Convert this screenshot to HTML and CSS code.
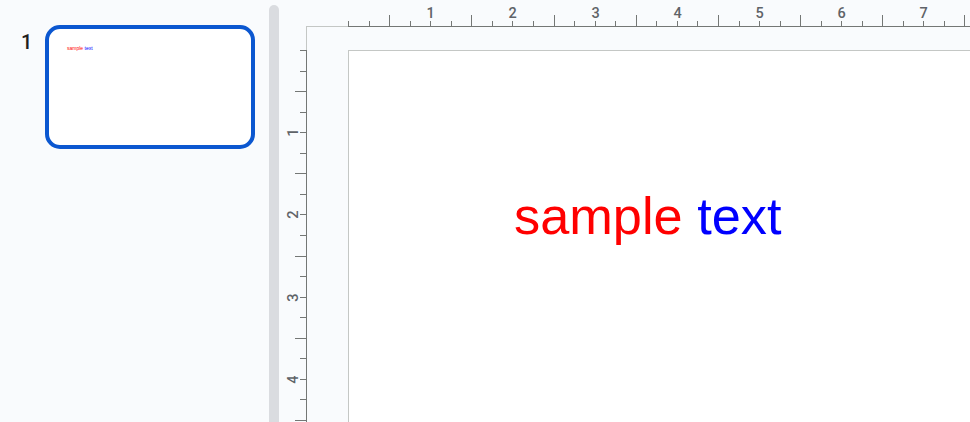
FILE: index.html
```html
<!DOCTYPE html>
<html>
<head>
<meta charset="utf-8">
<link rel="stylesheet" href="styles.css">
</head>
<body>
<div class="app">
  <aside class="filmstrip">
    <div class="slide-item">
      <span class="slide-num">1</span>
      <div class="thumb">
        <div class="thumb-text"><span class="red">sample</span> <span class="blue">text</span></div>
      </div>
    </div>
  </aside>
  <div class="scrollbar"></div>
  <main class="editor">
    <div class="corner">
      <svg width="28" height="27" class="ruler-svg"><line x1="27" y1="26.5" x2="28" y2="26.5" class="light"/></svg>
    </div>
    <div class="hruler">
      <svg width="663" height="27" class="ruler-svg">
        <line x1="0" y1="26.5" x2="41" y2="26.5" class="light"/>
        <line x1="41" y1="26.5" x2="663" y2="26.5" class="dark"/>
        <g class="dark">
          <line x1="41.5" y1="21" x2="41.5" y2="26"/>
          <line x1="62.5" y1="21" x2="62.5" y2="26"/>
          <line x1="82.5" y1="15" x2="82.5" y2="26"/>
          <line x1="103.5" y1="21" x2="103.5" y2="26"/>
          <line x1="123.5" y1="21" x2="123.5" y2="26"/>
          <line x1="144.5" y1="21" x2="144.5" y2="26"/>
          <line x1="164.5" y1="15" x2="164.5" y2="26"/>
          <line x1="185.5" y1="21" x2="185.5" y2="26"/>
          <line x1="205.5" y1="21" x2="205.5" y2="26"/>
          <line x1="226.5" y1="21" x2="226.5" y2="26"/>
          <line x1="247.5" y1="15" x2="247.5" y2="26"/>
          <line x1="267.5" y1="21" x2="267.5" y2="26"/>
          <line x1="288.5" y1="21" x2="288.5" y2="26"/>
          <line x1="308.5" y1="21" x2="308.5" y2="26"/>
          <line x1="329.5" y1="15" x2="329.5" y2="26"/>
          <line x1="349.5" y1="21" x2="349.5" y2="26"/>
          <line x1="370.5" y1="21" x2="370.5" y2="26"/>
          <line x1="390.5" y1="21" x2="390.5" y2="26"/>
          <line x1="411.5" y1="15" x2="411.5" y2="26"/>
          <line x1="432.5" y1="21" x2="432.5" y2="26"/>
          <line x1="452.5" y1="21" x2="452.5" y2="26"/>
          <line x1="473.5" y1="21" x2="473.5" y2="26"/>
          <line x1="493.5" y1="15" x2="493.5" y2="26"/>
          <line x1="514.5" y1="21" x2="514.5" y2="26"/>
          <line x1="534.5" y1="21" x2="534.5" y2="26"/>
          <line x1="555.5" y1="21" x2="555.5" y2="26"/>
          <line x1="575.5" y1="15" x2="575.5" y2="26"/>
          <line x1="596.5" y1="21" x2="596.5" y2="26"/>
          <line x1="616.5" y1="21" x2="616.5" y2="26"/>
          <line x1="637.5" y1="21" x2="637.5" y2="26"/>
          <line x1="657.5" y1="15" x2="657.5" y2="26"/>
        </g>
        <g class="nums">
          <text x="123.5" y="18">1</text>
          <text x="205.5" y="18">2</text>
          <text x="288.5" y="18">3</text>
          <text x="370.5" y="18">4</text>
          <text x="452.5" y="18">5</text>
          <text x="534.5" y="18">6</text>
          <text x="616.5" y="18">7</text>
        </g>
      </svg>
    </div>
    <div class="vruler">
      <svg width="28" height="395" class="ruler-svg">
        <line x1="27.5" y1="0" x2="27.5" y2="23" class="light"/>
        <line x1="27.5" y1="23" x2="27.5" y2="395" class="dark"/>
        <g class="dark">
          <line x1="21" y1="23.5" x2="27" y2="23.5"/>
          <line x1="21" y1="44.5" x2="27" y2="44.5"/>
          <line x1="16" y1="64.5" x2="27" y2="64.5"/>
          <line x1="21" y1="85.5" x2="27" y2="85.5"/>
          <line x1="21" y1="105.5" x2="27" y2="105.5"/>
          <line x1="21" y1="126.5" x2="27" y2="126.5"/>
          <line x1="16" y1="146.5" x2="27" y2="146.5"/>
          <line x1="21" y1="167.5" x2="27" y2="167.5"/>
          <line x1="21" y1="187.5" x2="27" y2="187.5"/>
          <line x1="21" y1="208.5" x2="27" y2="208.5"/>
          <line x1="16" y1="229.5" x2="27" y2="229.5"/>
          <line x1="21" y1="249.5" x2="27" y2="249.5"/>
          <line x1="21" y1="270.5" x2="27" y2="270.5"/>
          <line x1="21" y1="290.5" x2="27" y2="290.5"/>
          <line x1="16" y1="311.5" x2="27" y2="311.5"/>
          <line x1="21" y1="331.5" x2="27" y2="331.5"/>
          <line x1="21" y1="352.5" x2="27" y2="352.5"/>
          <line x1="21" y1="372.5" x2="27" y2="372.5"/>
          <line x1="16" y1="393.5" x2="27" y2="393.5"/>
        </g>
        <g class="nums">
          <text transform="translate(19 105.5) rotate(-90)">1</text>
          <text transform="translate(19 187.5) rotate(-90)">2</text>
          <text transform="translate(19 270.5) rotate(-90)">3</text>
          <text transform="translate(19 352.5) rotate(-90)">4</text>
        </g>
      </svg>
    </div>
    <div class="canvas">
      <div class="slide">
        <p class="slide-text"><span class="red">sample</span> <span class="blue">text</span></p>
      </div>
    </div>
  </main>
</div>
</body>
</html>
```
FILE: styles.css
```css
html, body {
  margin: 0;
  padding: 0;
}
body {
  background: #f9fbfd;
  font-family: Roboto, "Liberation Sans", sans-serif;
  overflow: hidden;
}
.app {
  display: flex;
  width: 970px;
  height: 422px;
  overflow: hidden;
}
.filmstrip {
  width: 269px;
  flex-shrink: 0;
  box-sizing: border-box;
  padding: 25px 0 0 21px;
}
.slide-item {
  display: flex;
  align-items: flex-start;
}
.slide-num {
  width: 24px;
  padding-top: 8px;
  font-size: 20px;
  line-height: 19px;
  font-weight: 500;
  color: #1f1f1f;
}
.thumb {
  width: 210px;
  height: 124px;
  box-sizing: border-box;
  border: 4px solid #0b57d0;
  border-radius: 15px;
  background: #fff;
  padding: 17px 0 0 18px;
}
.thumb-text {
  font-family: "Liberation Sans", Arial, sans-serif;
  font-size: 5px;
  line-height: 1;
  margin: 0;
}
.red { color: #ff0000; }
.blue { color: #0000ff; }
.scrollbar {
  width: 10px;
  flex-shrink: 0;
  margin-top: 5px;
  background: #dadce0;
  border-radius: 5px 5px 0 0;
}
.editor {
  flex: 1;
  min-width: 0;
  display: grid;
  grid-template-columns: 28px 1fr;
  grid-template-rows: 27px 1fr;
  overflow: hidden;
}
.ruler-svg {
  display: block;
}
.ruler-svg line {
  shape-rendering: crispEdges;
  stroke-width: 1;
}
.ruler-svg .light {
  stroke: #c4c7c5;
}
.ruler-svg .dark,
.ruler-svg .dark line {
  stroke: #747775;
}
.ruler-svg .nums text {
  font-family: Roboto, "Liberation Sans", sans-serif;
  font-size: 14.5px;
  font-weight: 500;
  fill: #5f6368;
  text-anchor: middle;
}
.hruler, .vruler, .corner {
  overflow: hidden;
}
.canvas {
  overflow: hidden;
  padding: 23px 0 0 41px;
  display: flex;
  align-items: flex-start;
}
.slide {
  flex-shrink: 0;
  width: 820px;
  height: 461px;
  border: 1px solid #c4c7c5;
  background: #fff;
}
.slide-text {
  margin: 0;
  padding: 139px 0 0 165px;
  font-family: "Liberation Sans", Arial, sans-serif;
  font-size: 52.3px;
  line-height: 1;
}
```
